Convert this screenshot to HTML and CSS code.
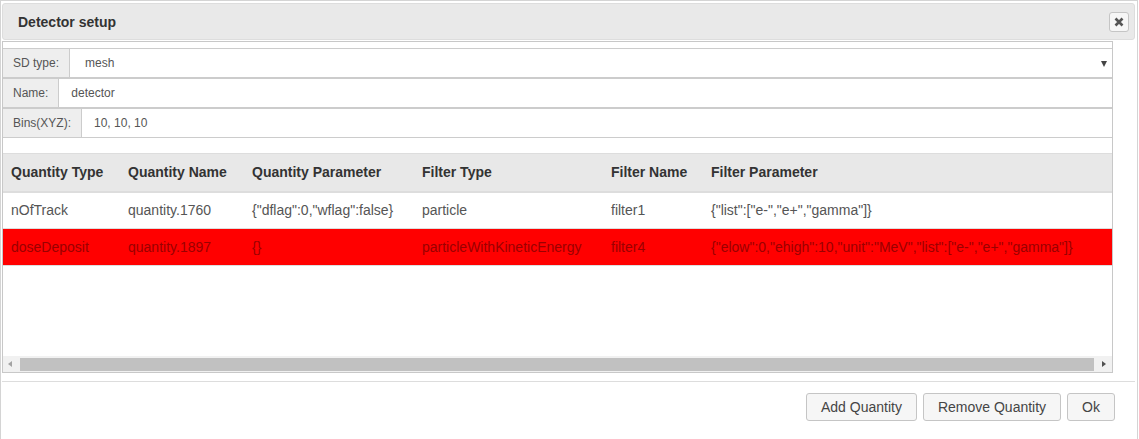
FILE: index.html
```html
<!DOCTYPE html>
<html>
<head>
<meta charset="utf-8">
<link rel="stylesheet" href="styles.css">
</head>
<body>
<div class="dialog">
  <div class="titlebar">
    <span class="title">Detector setup</span>
    <button class="close" type="button" aria-label="close">
      <svg width="10" height="10" viewBox="0 0 10 10"><path d="M1.5 1.5 L8.5 8.5 M8.5 1.5 L1.5 8.5" stroke="#555" stroke-width="2.6" stroke-linecap="butt"/></svg>
    </button>
  </div>
  <div class="content">
    <div class="field">
      <span class="addon">SD type:</span>
      <div class="control select">mesh<span class="caret"></span></div>
    </div>
    <div class="field">
      <span class="addon">Name:</span>
      <div class="control">detector</div>
    </div>
    <div class="field">
      <span class="addon">Bins(XYZ):</span>
      <div class="control">10, 10, 10</div>
    </div>
    <div class="grid">
      <div class="grid-body">
        <table class="qtable">
          <colgroup>
            <col class="c1"><col class="c2"><col class="c3"><col class="c4"><col class="c5"><col class="c6">
          </colgroup>
          <thead>
            <tr><th>Quantity Type</th><th>Quantity Name</th><th>Quantity Parameter</th><th>Filter Type</th><th>Filter Name</th><th>Filter Parameter</th></tr>
          </thead>
          <tbody>
            <tr><td>nOfTrack</td><td>quantity.1760</td><td>{"dflag":0,"wflag":false}</td><td>particle</td><td>filter1</td><td>{"list":["e-","e+","gamma"]}</td></tr>
            <tr class="selected"><td>doseDeposit</td><td>quantity.1897</td><td>{}</td><td>particleWithKineticEnergy</td><td>filter4</td><td>{"elow":0,"ehigh":10,"unit":"MeV","list":["e-","e+","gamma"]}</td></tr>
          </tbody>
        </table>
      </div>
      <div class="hscroll">
        <span class="arrow left"></span>
        <div class="track"><div class="thumb"></div></div>
        <span class="arrow right"></span>
      </div>
    </div>
  </div>
  <div class="buttonpane">
    <button class="btn" type="button">Add Quantity</button>
    <button class="btn" type="button">Remove Quantity</button>
    <button class="btn" type="button">Ok</button>
  </div>
</div>
</body>
</html>
```
FILE: styles.css
```css
* { box-sizing: border-box; }
html, body { margin: 0; padding: 0; background: #fff; }
body {
  font-family: "Liberation Sans", Arial, sans-serif;
  font-size: 14px;
  color: #555;
}
.dialog {
  width: 1138px;
  min-height: 439px;
  border: 1px solid #d4d4d4;
  border-bottom: none;
  padding: 2px 2px 0 1px;
  background: #fff;
}
.titlebar {
  height: 37px;
  display: flex;
  align-items: center;
  justify-content: space-between;
  background: #e9e9e9;
  border: 1px solid #dddddd;
  border-radius: 3px;
  padding: 0 5px 0 15px;
}
.title {
  font-weight: bold;
  font-size: 14px;
  color: #333;
}
.close {
  width: 20px;
  height: 20px;
  padding: 0;
  display: flex;
  align-items: center;
  justify-content: center;
  background: #f6f6f6;
  border: 1px solid #c5c5c5;
  border-radius: 3px;
}
.content {
  width: 1111px;
  margin-top: 1px;
  border: 1px solid #c8c8c8;
  padding-top: 6px;
}
.field {
  display: flex;
  height: 30px;
  font-size: 12px;
  color: #555;
}
.addon {
  display: flex;
  align-items: center;
  padding: 0 10px;
  background: #eeeeee;
  border: 1px solid #cccccc;
  border-left: none;
}
.control {
  flex: 1;
  display: flex;
  align-items: center;
  padding-left: 12px;
  border-top: 1px solid #cccccc;
  border-bottom: 1px solid #cccccc;
  background: #fff;
}
.select {
  padding-left: 15px;
  justify-content: space-between;
  padding-right: 5px;
}
.caret {
  width: 0;
  height: 0;
  border-top: 6px solid #444;
  border-left: 3px solid transparent;
  border-right: 3px solid transparent;
  margin-top: 1px;
}
.grid {
  margin-top: 15px;
}
.grid-body {
  height: 203px;
  overflow: hidden;
}
.qtable {
  width: 1109px;
  table-layout: fixed;
  border-collapse: collapse;
}
.c1 { width: 117px; }
.c2 { width: 124px; }
.c3 { width: 170px; }
.c4 { width: 189px; }
.c5 { width: 100px; }
.c6 { width: 409px; }
.qtable th {
  height: 38px;
  text-align: left;
  font-weight: bold;
  color: #333;
  background: #e8e8e8;
  border-top: 1px solid #dddddd;
  border-bottom: 2px solid #dddddd;
  padding: 0 0 0 8px;
  white-space: nowrap;
}
.qtable td {
  height: 37px;
  padding: 0 0 0 8px;
  border-bottom: 1px solid #dddddd;
  white-space: nowrap;
  overflow: visible;
  color: #555;
}
.qtable tr.selected td {
  background: #ff0000;
  color: #9a0000;
}
.hscroll {
  height: 16px;
  display: flex;
  align-items: center;
  background: #f1f1f1;
}
.arrow {
  width: 0;
  height: 0;
  border-top: 3.5px solid transparent;
  border-bottom: 3.5px solid transparent;
}
.arrow.left {
  border-right: 4px solid #a3a3a3;
  margin: 0 6px 0 5px;
}
.arrow.right {
  border-left: 4px solid #505050;
  margin: 0 6px 0 8px;
}
.track {
  flex: 1;
  height: 100%;
  padding: 2px 0 1px 2px;
}
.thumb {
  height: 100%;
  background: #c1c1c1;
}
.buttonpane {
  margin-top: 8px;
  border-top: 1px solid #dddddd;
  padding: 11px 20px 0 0;
  display: flex;
  justify-content: flex-end;
  gap: 6px;
}
.btn {
  height: 28px;
  padding: 0 14px;
  font-family: "Liberation Sans", Arial, sans-serif;
  font-size: 14px;
  color: #454545;
  background: #f6f6f6;
  border: 1px solid #c5c5c5;
  border-radius: 3px;
}
```
